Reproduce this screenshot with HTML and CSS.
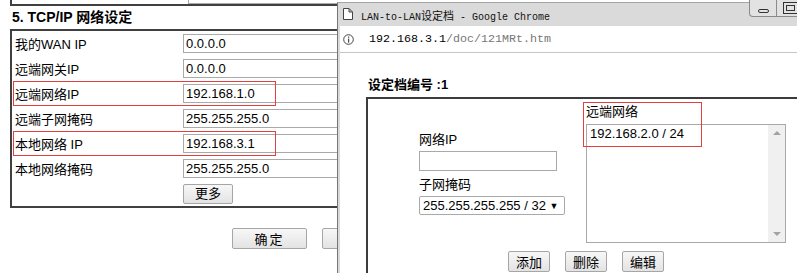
FILE: index.html
```html
<!DOCTYPE html>
<html lang="zh-CN">

<head>
    <meta charset="UTF-8">
    <title>TCP/IP 网络设定</title>
    <link rel="stylesheet" href="styles.css">
</head>

<body>
    <div class="desktop">
        <!-- router settings page behind the popup -->
        <div class="page">
            <div class="prev-box">
                <div class="prev-input"></div>
            </div>
            <div class="section-title">5. TCP/IP 网络设定</div>
            <div class="form-table">
                <div class="row">
                    <span class="label">我的WAN IP</span>
                    <input class="field" type="text" value="0.0.0.0">
                </div>
                <div class="row">
                    <span class="label">远端网关IP</span>
                    <input class="field" type="text" value="0.0.0.0">
                </div>
                <div class="row marked">
                    <span class="label">远端网络IP</span>
                    <input class="field" type="text" value="192.168.1.0">
                    <span class="mark"></span>
                </div>
                <div class="row">
                    <span class="label">远端子网掩码</span>
                    <input class="field" type="text" value="255.255.255.0">
                </div>
                <div class="row marked">
                    <span class="label">本地网络 IP</span>
                    <input class="field" type="text" value="192.168.3.1">
                    <span class="mark"></span>
                </div>
                <div class="row">
                    <span class="label">本地网络掩码</span>
                    <input class="field" type="text" value="255.255.255.0">
                </div>
                <div class="row">
                    <span class="label"></span>
                    <div><button class="btn btn-more">更多</button></div>
                </div>
            </div>
            <div class="actions">
                <button class="btn btn-wide">确定</button>
                <!-- second button sits under the popup, only its edge shows -->
                <button class="btn btn-wide"></button>
            </div>
        </div>

        <!-- chrome popup window -->
        <div class="window">
            <div class="titlebar">
                <svg class="page-icon" width="10" height="12" viewBox="0 0 10 12">
                    <path d="M0.5 0.5 H6 L9.5 4 V11.5 H0.5 Z M6 0.5 V4 H9.5" fill="#fff" stroke="#444" stroke-width="1" />
                </svg>
                <span class="title">LAN-to-LAN<span class="cjk">设定档</span> - Google Chrome</span>
                <div class="controls">
                    <span class="ctl ctl-min"><i></i></span>
                    <span class="ctl ctl-max"><i></i></span>
                    <span class="ctl ctl-close"></span>
                </div>
            </div>
            <div class="addressbar">
                <svg class="info-icon" width="11" height="11" viewBox="0 0 11 11">
                    <circle cx="5.5" cy="5.5" r="4.8" fill="none" stroke="#444" stroke-width="1" />
                    <rect x="5" y="2.5" width="1.2" height="1.2" fill="#444" />
                    <rect x="5" y="4.6" width="1.2" height="4" fill="#444" />
                </svg>
                <span class="url"><span class="host">192.168.3.1</span>/doc/121MRt.htm</span>
            </div>
            <div class="content">
                <div class="profile-title">设定档编号 :1</div>
                <div class="profile-box">
                    <div class="profile-grid">
                        <div class="local-col">
                            <div class="plabel">网络IP</div>
                            <input class="pfield" type="text" value="">
                            <div class="plabel">子网掩码</div>
                            <div class="pselect">255.255.255.255 / 32 <span class="caret">▼</span></div>
                        </div>
                        <div class="remote-col">
                            <div class="plabel">远端网络</div>
                            <div class="listbox">
                                <div class="list-items">
                                    <div>192.168.2.0 / 24</div>
                                </div>
                                <div class="scrollbar">
                                    <span class="arrow-up"></span>
                                    <span class="arrow-down"></span>
                                </div>
                            </div>
                            <span class="mark"></span>
                        </div>
                    </div>
                    <div class="profile-actions">
                        <button class="btn btn-small">添加</button>
                        <button class="btn btn-small">删除</button>
                        <button class="btn btn-small">编辑</button>
                    </div>
                </div>
            </div>
        </div>
    </div>
</body>

</html>
```

FILE: styles.css
```css
body {
    margin: 0;
    background: #fff;
    font-family: 'Liberation Sans', 'Noto Sans CJK SC', sans-serif;
    font-size: 13px;
    color: #000;
}

.desktop {
    display: flex;
    width: 797px;
    height: 273px;
    overflow: hidden;
}

/* ---------- settings page ---------- */

.page {
    flex: none;
    width: 337px;
    overflow: hidden;
    background: #fff;
}

.prev-box {
    margin-left: 10px;
    width: 400px;
    height: 4px;
    border-left: 2px solid #404040;
    border-bottom: 2px solid #404040;
}

.prev-input {
    margin-left: 176px;
    height: 3px;
    border-left: 1px solid #a9a9a9;
    border-bottom: 1px solid #a9a9a9;
}

.section-title {
    height: 23px;
    line-height: 23px;
    padding-left: 12px;
    font-size: 14px;
    font-weight: bold;
}

.form-table {
    margin-left: 10px;
    width: 400px;
    border: 2px solid #404040;
    border-right: none;
}

.row {
    position: relative;
    display: grid;
    grid-template-columns: 171px 1fr;
    align-items: center;
    height: 25px;
}

.label {
    padding-left: 3px;
    white-space: nowrap;
}

.field {
    box-sizing: border-box;
    width: 220px;
    height: 19px;
    margin: 0;
    padding: 0 2px;
    border: 1px solid #a9a9a9;
    font-family: 'Liberation Sans', sans-serif;
    font-size: 13px;
    color: #000;
}

.mark {
    position: absolute;
    left: 1px;
    top: 0;
    width: 263px;
    height: 25px;
    box-sizing: border-box;
    border: 1px solid #e4403e;
    pointer-events: none;
}

.btn {
    box-sizing: border-box;
    margin: 0;
    padding: 0;
    border: 1px solid #a6a6a6;
    border-radius: 2px;
    background: linear-gradient(#f7f7f7, #e3e3e3);
    font-family: 'Liberation Sans', 'Noto Sans CJK SC', sans-serif;
    font-size: 13px;
    color: #000;
}

.btn-more {
    display: block;
    width: 50px;
    height: 20px;
    line-height: 16px;
}

.actions {
    display: flex;
    gap: 15px;
    margin-top: 20px;
    padding-left: 232px;
}

.btn-wide {
    flex: none;
    width: 75px;
    height: 21px;
    letter-spacing: 2px;
}

/* ---------- popup window ---------- */

.window {
    flex: none;
    width: 509px;
    margin-top: 2px;
    padding-left: 2px;
    background: #dadada;
    border-left: 1px solid #767676;
    border-top: 1px solid #a4a4a4;
}

.titlebar {
    display: flex;
    align-items: flex-start;
    height: 23px;
}

.page-icon {
    flex: none;
    margin: 5px 0 0 3px;
}

.title {
    margin: 6px 0 0 8px;
    font-family: 'Liberation Mono', monospace;
    font-size: 10px;
    line-height: 12px;
    color: #111;
    white-space: nowrap;
}

.title .cjk {
    font-family: 'Noto Sans CJK SC', sans-serif;
    font-size: 11px;
}

.controls {
    display: flex;
    margin: -3px 0 0 auto;
    height: 16px;
    border-left: 1px solid #8a8a8a;
    border-bottom: 1px solid #8a8a8a;
    border-bottom-left-radius: 4px;
    background: #e2e2e2;
}

.ctl {
    display: flex;
    justify-content: center;
    height: 16px;
}

.ctl-min {
    width: 26px;
    align-items: flex-end;
}

.ctl-min i {
    display: block;
    width: 9px;
    height: 2px;
    margin-bottom: 3px;
    border: 1px solid #333;
    border-radius: 2px;
}

.ctl-max {
    width: 26px;
    align-items: center;
    border-left: 1px solid #8a8a8a;
}

.ctl-max i {
    display: block;
    width: 7px;
    height: 4px;
    border: 1px solid #333;
    outline: 2px solid #e2e2e2;
    box-shadow: 0 0 0 3px #333;
}

.ctl-close {
    width: 45px;
    border-left: 1px solid #8a8a8a;
}

.addressbar {
    display: flex;
    align-items: center;
    height: 26px;
    background: #fff;
    border-bottom: 1px solid #c6c6c6;
}

.info-icon {
    flex: none;
    margin-left: 3px;
}

.url {
    margin-left: 15px;
    font-family: 'Liberation Mono', monospace;
    font-size: 11.67px;
    color: #777;
    white-space: nowrap;
}

.url .host {
    color: #000;
}

.content {
    height: 230px;
    padding-top: 24px;
    background: #fff;
}

.profile-title {
    margin-left: 28px;
    height: 16px;
    line-height: 16px;
    font-weight: bold;
}

.profile-box {
    margin: 4px 0 0 26px;
    height: 200px;
    padding-top: 4px;
    border-top: 2px solid #3c3c3c;
    border-left: 2px solid #3c3c3c;
}

.profile-grid {
    display: grid;
    grid-template-columns: 167px 200px;
    align-items: center;
    padding-left: 51px;
}

.plabel {
    height: 17px;
    line-height: 17px;
    white-space: nowrap;
}

.pfield {
    box-sizing: border-box;
    display: block;
    width: 138px;
    height: 20px;
    margin: 3px 0 5px;
    padding: 0 2px;
    border: 1px solid #a9a9a9;
}

.pselect {
    box-sizing: border-box;
    width: 146px;
    height: 19px;
    margin-top: 3px;
    padding-left: 3px;
    line-height: 17px;
    border: 1px solid #a9a9a9;
    border-radius: 2px;
    white-space: nowrap;
}

.caret {
    font-size: 9px;
    vertical-align: 1px;
}

.remote-col {
    position: relative;
}

.remote-col .mark {
    left: -3px;
    top: -1px;
    width: 119px;
    height: 45px;
}

.listbox {
    box-sizing: border-box;
    display: flex;
    width: 200px;
    height: 119px;
    margin-top: 4px;
    border: 1px solid #a9a9a9;
}

.list-items {
    flex: 1;
    padding: 1px 3px;
    line-height: 16px;
}

.scrollbar {
    display: flex;
    flex-direction: column;
    justify-content: space-between;
    align-items: center;
    width: 17px;
    padding: 6px 0;
    box-sizing: border-box;
    background: #f0f0f0;
}

.arrow-up {
    border-left: 4px solid transparent;
    border-right: 4px solid transparent;
    border-bottom: 4px solid #a3a3a3;
}

.arrow-down {
    border-left: 4px solid transparent;
    border-right: 4px solid transparent;
    border-top: 4px solid #a3a3a3;
}

.profile-actions {
    display: flex;
    gap: 15px;
    margin-top: 8px;
    padding-left: 140px;
}

.btn-small {
    width: 42px;
    height: 21px;
}
```
